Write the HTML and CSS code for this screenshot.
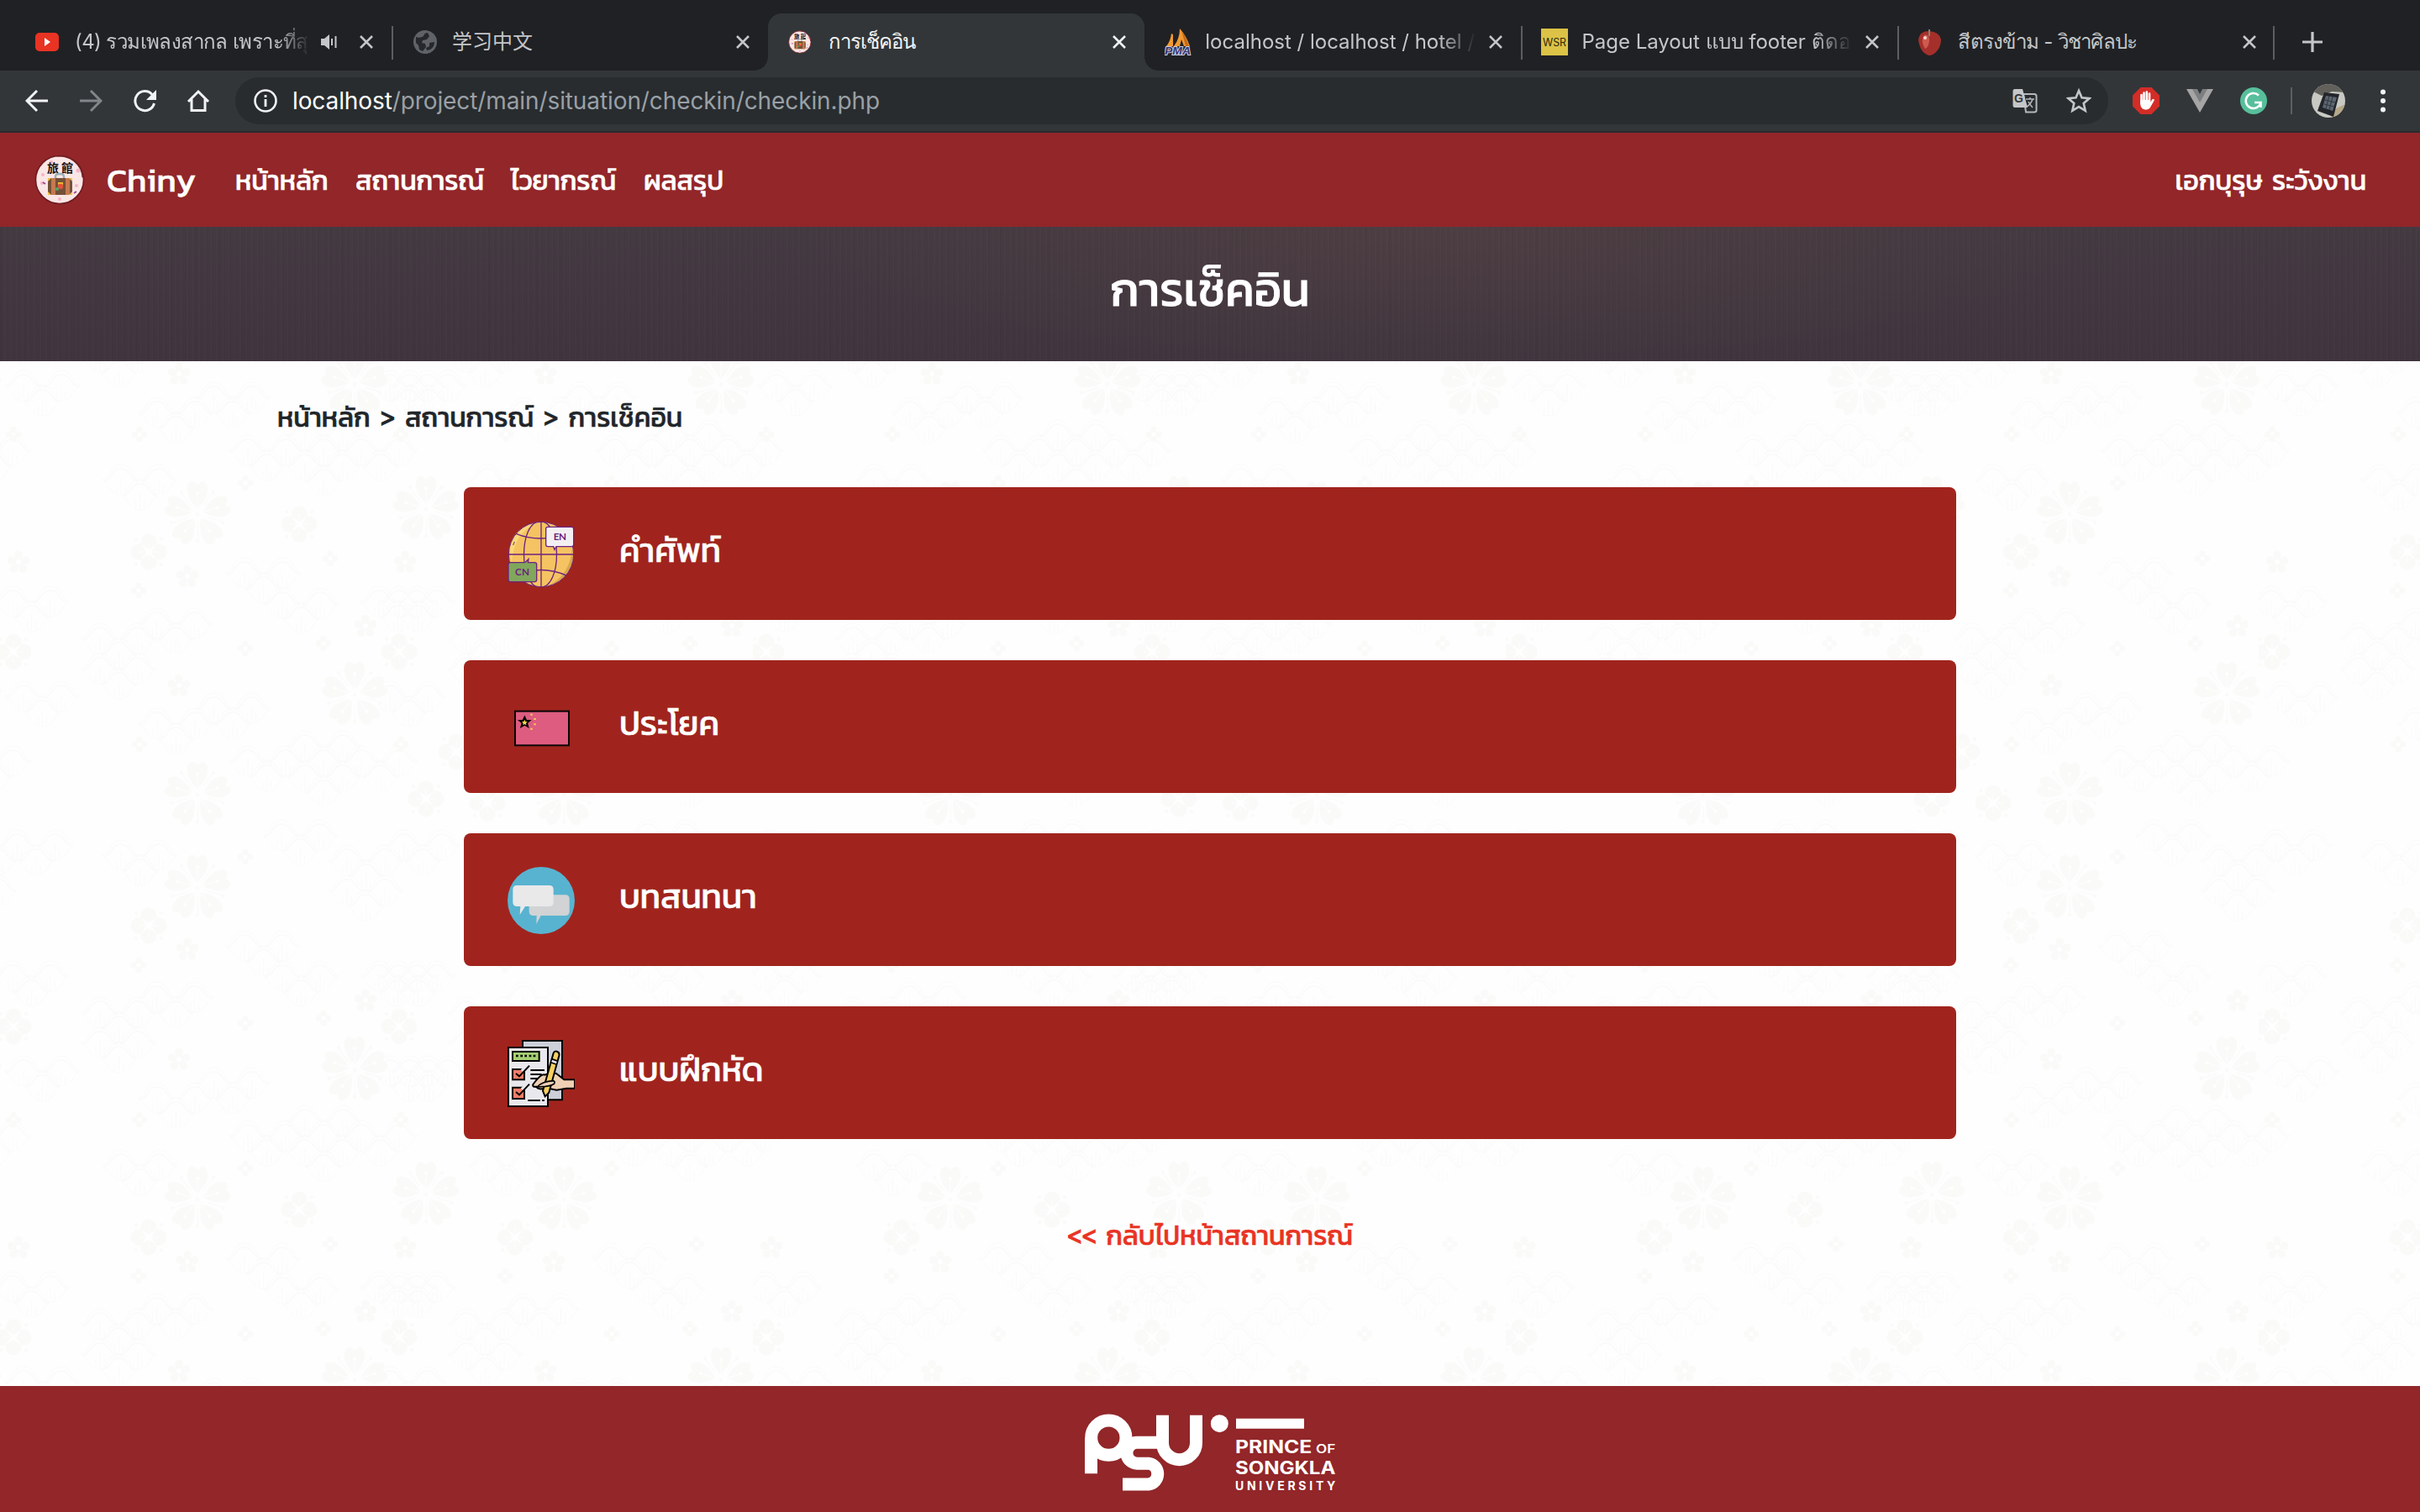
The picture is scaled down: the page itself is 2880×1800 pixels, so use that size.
FILE: index.html
```html
<!DOCTYPE html>
<html lang="th">
<head>
<meta charset="utf-8">
<title>การเช็คอิน</title>
<link rel="stylesheet" href="styles.css">
</head>
<body>
<svg class="defs" width="0" height="0" aria-hidden="true">
  <defs>
    <symbol id="close" viewBox="0 0 18 18"><path d="M2 2L16 16M16 2L2 16" fill="none" stroke="currentColor" stroke-width="2.6"/></symbol>
    <symbol id="suitcase" viewBox="0 0 60 60">
      <circle cx="30" cy="30" r="28.5" fill="#fbe6e6" stroke="#6d1a1f" stroke-width="1.6"/>
      <path d="M30 1.5A28.500 28.500 0 0 1 58.500 28L56.500 27A26 26 0 0 0 26 3Z" fill="#7a2427"/>
      <g fill="#f3b6c6"><circle cx="20" cy="9" r="2"/><circle cx="10" cy="24" r="2"/><circle cx="52" cy="19" r="2.500"/><circle cx="9" cy="34" r="2"/><circle cx="50" cy="37" r="2"/><circle cx="30" cy="53" r="2"/></g>
      <path d="M10 33l3 2M47 46l3-2" stroke="#a24a96" stroke-width="2"/>
      <g font-size="14" font-weight="700" font-family="Noto Sans CJK TC, sans-serif" fill="#171112"><text x="15" y="21" textLength="31">旅館</text></g>
      <path d="M25 29v-3q0-3 5-3t5 3v3" fill="none" stroke="#9ab0b8" stroke-width="2.500"/>
      <rect x="16" y="28" width="29" height="20" rx="2" fill="#745038"/>
      <path d="M20 28h5v20h-5zM37 28h5v20h-5z" fill="#c67a50"/>
      <path d="M16 32v-4h4zM45 32v-4h-4zM16 44v4h4zM45 44v4h-4z" fill="#f2c143"/>
      <path d="M28 33h6v5h-6z" fill="#f2b632"/><circle cx="31" cy="38" r="3.200" fill="#e0523c"/><circle cx="27" cy="41" r="2" fill="#4fae63"/>
    </symbol>
  </defs>
</svg>

<div class="window">
  <header class="chrome">
    <div class="tabs">
      <div class="tab">
        <span class="favicon"><svg viewBox="0 0 32 32"><rect x="0" y="5" width="28" height="22" rx="5" fill="#e93323"/><path d="M11 11v10l7-5z" fill="#fff"/></svg></span>
        <span class="tab-title fade"><span class="t1">(4) รวมเพลงสากล เพราะที่สุด</span></span>
        <svg class="speaker" viewBox="0 0 20 20"><path d="M0 6h4l6-5v18l-6-5H0z" fill="#c4c6c9"/><path d="M13 6v8M17.500 3v14" stroke="#c4c6c9" stroke-width="2" fill="none"/></svg>
        <svg class="close"><use href="#close"/></svg>
      </div>
      <div class="tab line">
        <span class="favicon"><svg viewBox="0 0 32 32"><circle cx="16" cy="16" r="14" fill="#5f6368"/><path d="M5 10q5 2 9-1 1-4 5-4l2 4-3 4-5 1-1 3 4 1 1 4-4 5-4-2-1-5-3-3zM21 17l6-1q0 6-5 9l-4 1-1-3 4-2z" fill="#26282b"/></svg></span>
        <span class="tab-title"><span class="t2">学习中文</span></span>
        <svg class="close"><use href="#close"/></svg>
      </div>
      <div class="tab active">
        <span class="favicon"><svg viewBox="0 0 60 60"><use href="#suitcase" width="52" height="60"/></svg></span>
        <span class="tab-title"><span class="t3">การเช็คอิน</span></span>
        <svg class="close"><use href="#close"/></svg>
      </div>
      <div class="tab">
        <span class="favicon"><svg viewBox="0 0 32 32"><path d="M2 21Q7 15 8 6l2 1v14zM11 21Q18 12 18 0q8 9 12 21l-7 0-3-8-2 8z" fill="#f29a32"/><path d="M20 2q6 9 9 19h-4z" fill="#c56a1c"/><text x="0" y="31" font-size="12" font-weight="700" font-style="italic" textLength="31" lengthAdjust="spacingAndGlyphs" font-family="Liberation Sans, sans-serif" fill="#35356f" stroke="#cdd0e4" stroke-width="1.800" paint-order="stroke">PMA</text></svg></span>
        <span class="tab-title fade"><span class="t4">localhost / localhost / hotel /</span></span>
        <svg class="close"><use href="#close"/></svg>
      </div>
      <div class="tab line">
        <span class="favicon"><svg viewBox="0 0 32 32"><path d="M0 0h32v32H0z" fill="#dcc247"/><text x="2" y="21" font-size="13" textLength="28" lengthAdjust="spacingAndGlyphs" font-family="Inter, sans-serif" fill="#2b280d">WSR</text></svg></span>
        <span class="tab-title fade"><span class="t5">Page Layout แบบ footer ติดอยู่</span></span>
        <svg class="close"><use href="#close"/></svg>
      </div>
      <div class="tab line last">
        <span class="favicon"><svg viewBox="0 0 32 32"><path d="M14 3q-12 0-13 11 2 11 7 15 4 3 6 3 4 0 8-4 6-6 6-15-2-9-14-10z" fill="#a5302b"/><path d="M8 8q5-2 6 5 0 9-5 11-6-9-1-16z" fill="#cf5a50"/><path d="M14 1v8" stroke="#8d8170" stroke-width="2"/><circle cx="9" cy="11" r="2" fill="#f2dad6"/></svg></span>
        <span class="tab-title"><span class="t6">สีตรงข้าม - วิชาศิลปะ</span></span>
        <svg class="close"><use href="#close"/></svg>
      </div>
      <svg class="plus" viewBox="0 0 24 24"><path d="M12 0v24M0 12h24" stroke="#c4c6c9" stroke-width="3.200"/></svg>
    </div>
    <div class="toolbar">
      <div class="nav-buttons">
        <svg viewBox="0 0 28 28"><path d="M27 14H3M14 2L2 14 14 26" fill="none" stroke="#f1f3f4" stroke-width="3"/></svg>
        <svg viewBox="0 0 28 28"><path d="M1 14H25M14 2L26 14 14 26" fill="none" stroke="#82868a" stroke-width="3"/></svg>
        <svg viewBox="0 0 28 28"><path d="M23 6.500A11.500 11.500 0 1 0 25.500 17" fill="none" stroke="#f1f3f4" stroke-width="3"/><path d="M28 1v12H16z" fill="#f1f3f4"/></svg>
        <svg viewBox="0 0 28 28"><path d="M2 15L14 3 26 15M6 12V25.500H22V12" fill="none" stroke="#f1f3f4" stroke-width="3"/></svg>
      </div>
      <div class="omnibox">
        <svg class="info" viewBox="0 0 28 28"><circle cx="14" cy="14" r="12.500" fill="none" stroke="#f1f3f4" stroke-width="2.600"/><path d="M14 12v9M14 7v3" stroke="#f1f3f4" stroke-width="2.800"/></svg>
        <span class="url"><b>localhost</b>/project/main/situation/checkin/checkin.php</span>
        <svg class="translate" viewBox="0 0 30 30"><path d="M13 7h13q2.500 0 2.500 2.500v17q0 2-2.500 2H16z" fill="none" stroke="#b4b7ba" stroke-width="2"/><path d="M3 1h9l6 22H3q-2.500 0-2.500-2V3Q.500 1 3 1z" fill="#c4c6c9"/><text x="2" y="17" font-size="14" font-weight="700" font-family="Liberation Sans, sans-serif" fill="#33373a">G</text><path d="M16 13h10M21 11v2M24 13q-2 6-7 9M19 16q2 4 5 7" fill="none" stroke="#b4b7ba" stroke-width="1.600"/></svg>
        <svg class="star" viewBox="0 0 30 30"><path d="M15 3l3.500 8.300 9 .8-6.800 5.900 2 8.800L15 22.100l-7.700 4.700 2-8.800L2.500 12.100l9-.8z" fill="none" stroke="#c4c6c9" stroke-width="2.600"/></svg>
      </div>
      <svg class="ext" viewBox="0 0 32 32"><path d="M9.500 0h13L32 9.500v13L22.500 32h-13L0 22.500v-13z" fill="#d32d27"/><g fill="none" stroke="#fff" stroke-width="2.600" stroke-linecap="round"><path d="M10.500 9v10M13.500 6.500V17M16.800 5.500V17M20 7.500V19M24.500 15l-3.500 6"/></g><path d="M9.200 15h12v4l1.500 1q-2 6.500-6 6.500h-2q-5.500-1-5.500-7z" fill="#fff"/></svg>
      <svg class="ext" viewBox="0 0 32 32"><path d="M0 2h8l8 14 8-14h8L16 30z" fill="#a5a5a5"/><path d="M7 2h6l3 6 3-6h6L16 18z" fill="#7d7f80"/></svg>
      <svg class="ext" viewBox="0 0 32 32"><circle cx="16" cy="16" r="16" fill="#57bf9b"/><path d="M22 9.500A9 9 0 1 0 24.500 18H17M24.500 18v6" fill="none" stroke="#fff" stroke-width="2.600"/></svg>
      <span class="separator"></span>
      <svg class="avatar" viewBox="0 0 40 40"><clipPath id="round"><circle cx="20" cy="20" r="20"/></clipPath><g clip-path="url(#round)"><path d="M0 0h40v40H0z" fill="#c9c9c4"/><path d="M0 0h40v10L24 9 12 14 0 8z" fill="#62605a"/><path d="M27 30l13-6v16H22z" fill="#b5a888"/><path d="M15 10l18 2-7 27-19-7z" fill="#23252b"/><path d="M17 14l13 2-5 16-12-4z" fill="#5c6670"/><path d="M16 19l12 3M15 24l12 3M21 14l-4 15M25 15l-4 16" stroke="#30363e"/></g></svg>
      <svg class="dots" viewBox="0 0 6 28"><circle cx="3" cy="3.500" r="3"/><circle cx="3" cy="14" r="3"/><circle cx="3" cy="24.500" r="3"/></svg>
    </div>
  </header>

  <nav class="navbar">
    <svg class="brand-logo"><use href="#suitcase"/></svg>
    <a class="brand">Chiny</a>
    <a class="link n1">หน้าหลัก</a>
    <a class="link n2">สถานการณ์</a>
    <a class="link n3">ไวยากรณ์</a>
    <a class="link n4">ผลสรุป</a>
    <a class="link user">เอกบุรุษ ระวังงาน</a>
  </nav>

  <section class="hero"><h1>การเช็คอิน</h1></section>

  <main class="page">
    <svg class="backdrop" width="2880" height="1220" aria-hidden="true">
      <defs>
        <g id="hump" fill="none" stroke="#fafafa"><path d="M-23 18C-12 18-15 0 0 0S12 18 23 18" stroke-width="1"/><path d="M-21 20C-10 18-12 5 0 5S10 18 21 20" stroke-width="1.500"/><path d="M-21 19C-13 24-13 36 0 36S13 24 21 19" stroke-width=".8"/><path d="M0 16v18M-5 24v10M5 24v10" stroke-width="1.100"/></g>
        <g id="v"><use href="#hump"/><use href="#hump" x="45"/><use href="#hump" x="22.500" y="18"/></g>
        <g id="chain"><use href="#v"/><use href="#v" x="45" y="36"/></g>
        <g id="c"><use href="#v"/><use href="#v" x="67.500" y="-18"/></g>
        <g id="b"><use href="#c"/><use href="#v" y="36"/></g>
        <g id="d"><use href="#v"/><use href="#hump" x="68" y="-18"/><use href="#hump" x="113" y="-18"/><use href="#hump" x="90"/><use href="#hump" x="135"/><use href="#hump" x="180"/><use href="#hump" x="68" y="18"/><use href="#hump" x="113" y="18"/><use href="#hump" x="158" y="18"/><use href="#hump" x="90" y="36"/></g>
        <g id="petal"><path d="M0-7C-14-20-15-34-8-39Q-4-40 0-35 4-40 8-39C15-34 14-20 0-7z" fill="#fafaf8"/><path d="M0-8v-17" stroke="#fff"/><circle cy="-25" r="2" fill="#fff"/><path d="M7-10L18-26" stroke="#fafaf8"/><circle cx="19" cy="-26" r="2" fill="#fafaf8"/></g>
        <g id="big"><use href="#petal"/><use href="#petal" transform="rotate(72)"/><use href="#petal" transform="rotate(144)"/><use href="#petal" transform="rotate(216)"/><use href="#petal" transform="rotate(288)"/><circle r="2.200" fill="#fafaf8"/></g>
        <g id="quad"><g fill="#fafaf8"><circle cy="-12" r="9.500"/><circle cy="12" r="9.500"/><circle cx="-12" r="9.500"/><circle cx="12" r="9.500"/><circle cx="15" cy="-15" r="2"/><circle cx="-15" cy="-15" r="2"/><circle cx="15" cy="15" r="2"/><circle cx="-15" cy="15" r="2"/></g><path d="M-8-8Q0-4 8 8Q0 4-8-8M8-8Q4 0-8 8Q-4 0 8-8" fill="#fff" stroke="#fff"/><path d="M-12 0h24M0-12v24" stroke="#fff"/></g>
        <g id="five"><g fill="#fafaf8"><circle cy="-8.500" r="4.800"/><circle cx="8.500" cy="-2" r="4.800"/><circle cx="5.500" cy="8" r="4.800"/><circle cx="-5.500" cy="8" r="4.800"/><circle cx="-8.500" cy="-2" r="4.800"/><circle r="6"/></g><circle r="3" fill="#fff"/></g>
        <g id="four"><g fill="#fafaf8"><circle cy="-5.500" r="3.800"/><circle cy="5.500" r="3.800"/><circle cx="5.500" r="3.800"/><circle cx="-5.500" r="3.800"/></g><circle r="2.500" fill="#fff"/></g>
        <g id="half">
          <use href="#v" x="28" y="11"/><use href="#v" x="28" y="381"/><use href="#v" x="144" y="123"/><use href="#v" x="144" y="570"/><use href="#v" x="15" y="714"/><use href="#v" x="15" y="268"/><use href="#v" x="335" y="546"/>
          <use href="#chain" x="291" y="234"/><use href="#chain" x="291" y="678"/>
          <use href="#b" x="119" y="757"/><use href="#b" x="119" y="312"/><use href="#b" x="413" y="576"/>
          <use href="#c" x="187" y="43"/><use href="#c" x="187" y="413"/>
          <use href="#d" x="295" y="88"/><use href="#d" x="295" y="458"/>
          <use href="#big" x="422" y="28"/><use href="#big" x="422" y="397"/><use href="#big" x="422" y="843"/><use href="#big" x="235" y="182"/><use href="#big" x="235" y="516"/><use href="#big" x="235" y="627"/>
          <use href="#quad" x="177" y="227"/><use href="#quad" x="177" y="672"/>
          <use href="#five" x="213" y="15"/><use href="#five" x="213" y="386"/><use href="#five" x="435" y="761"/><use href="#five" x="435" y="315"/><use href="#five" x="223" y="256"/><use href="#five" x="223" y="700"/>
          <use href="#four" x="165" y="719"/><use href="#four" x="292" y="788"/><use href="#four" x="385" y="782"/><use href="#four" x="166" y="87"/><use href="#four" x="292" y="145"/><use href="#four" x="393" y="235"/><use href="#four" x="165" y="273"/><use href="#four" x="292" y="342"/><use href="#four" x="385" y="336"/><use href="#four" x="166" y="456"/><use href="#four" x="292" y="590"/>
        </g>
        <g id="tile">
          <use href="#half"/><use href="#half" x="436"/>
          <use href="#v" x="475" y="268"/><use href="#v" x="488" y="11"/><use href="#v" x="475" y="714"/>
          <use href="#big" x="507" y="176"/>
          <use href="#quad" x="16" y="792"/><use href="#quad" x="475" y="792"/><use href="#quad" x="16" y="346"/><use href="#quad" x="475" y="346"/><use href="#quad" x="356" y="194"/><use href="#quad" x="543" y="465"/><use href="#quad" x="507" y="521"/><use href="#quad" x="580" y="526"/>
          <use href="#five" x="22" y="239"/><use href="#five" x="482" y="239"/><use href="#four" x="477" y="87"/><use href="#four" x="16" y="87"/><use href="#four" x="477" y="456"/>
        </g>
        <pattern id="sakura" width="896" height="816" patternUnits="userSpaceOnUse"><use href="#tile"/><use href="#tile" x="-896"/><use href="#tile" y="-816"/></pattern>
      </defs>
      <rect width="2880" height="1220" fill="url(#sakura)"/>
    </svg>

    <div class="content">
      <p class="crumbs">หน้าหลัก &gt; สถานการณ์ &gt; การเช็คอิน</p>
      <div class="menu">
        <a class="card">
          <svg viewBox="0 0 240 240">
            <clipPath id="ball"><circle cx="120" cy="120" r="116"/></clipPath>
            <circle cx="120" cy="120" r="116" fill="#f5c362"/>
            <path d="M8 92Q20 30 90 8L100 12Q25 40 14 150z" fill="#fbdc80" opacity=".8"/>
            <path d="M230 100Q225 190 150 230 215 210 234 140z" fill="#d9a64a"/>
            <g clip-path="url(#ball)" fill="none" stroke="#6d2280" stroke-width="4"><path d="M120 0v240M0 120h240"/><path d="M120 2C42 2 42 238 120 238M120 2C198 2 198 238 120 238" transform="translate(-3)"/><path d="M30 46Q115 80 212 46M30 196Q120 155 212 196"/></g>
            <circle cx="120" cy="120" r="116" fill="none" stroke="#6d2280" stroke-width="3"/>
            <path d="M20 87l5-12" stroke="#6d2280" stroke-width="3"/>
            <path d="M143 22h86q7 0 7 7v56q0 7-7 7h-55l-6 11-4-11h-21q-6 0-6-7V29q0-7 6-7z" fill="#f3f0f2" stroke="#6d2280" stroke-width="4"/>
            <path d="M10 149h52l13-12-2 12h24q7 0 7 7v55q0 7-7 7H10q-7 0-7-7v-55q0-7 7-7z" fill="#80a75c" stroke="#6d2280" stroke-width="4"/>
            <text x="164" y="70" font-size="35" font-weight="700" textLength="46" font-family="Lato, sans-serif" fill="#6d2280">EN</text>
            <text x="27" y="195" font-size="35" font-weight="700" textLength="51" font-family="Lato, sans-serif" fill="#6d2280">CN</text>
          </svg>
          <span class="c1">คำศัพท์</span>
        </a>
        <a class="card">
          <svg viewBox="0 0 240 240"><rect x="27" y="62" width="192" height="122" fill="#de5c80" stroke="#0b0506" stroke-width="6"/><path d="M61 81l6 13 14 1-11 9 4 15-13-8-13 8 4-15-11-9 14-1z" stroke="#000" stroke-width="4"/><path d="M61 92l3 7 7 1-5 5 1 7-6-4-6 4 1-7-5-5 7-1z" fill="#f6d650"/><path d="M82 71h7v6h-7zM94 87h7v6h-7zM94 106h7v6h-7zM82 122h7v6h-7z" fill="#f6d650"/></svg>
          <span class="c2">ประโยค</span>
        </a>
        <a class="card">
          <svg viewBox="0 0 240 240"><circle cx="120" cy="120" r="120" fill="#58b3d0"/><path d="M92 100h114q15 0 15 15v44q0 15-15 15h-87l-16 30 1-30H92q-15 0-15-15v-44q0-15 15-15z" fill="#d1d3d5"/><path d="M34 66h115q15 0 15 15v45q0 15-15 15H63l-19 30 2-30H34q-15 0-15-15V81q0-15 15-15z" fill="#e9e9ea"/></svg>
          <span class="c3">บทสนทนา</span>
        </a>
        <a class="card">
          <svg viewBox="0 0 240 240">
            <g stroke="#000" stroke-width="6"><path d="M54 3h141v211h-60V28H54z" fill="#cdd0d9"/><path d="M3 27h141v210H3z" fill="#e8e8ed"/><path d="M18 42h95v33H18z" fill="#a5cf72"/>
            <path d="M18 105h42v37H18zM18 170h42v40H18z" fill="#ef7d68"/></g>
            <path d="M30 57h8M46 57h8M61 57h8M77 57h8M92 57h8" stroke="#000" stroke-width="8"/>
            <path d="M52 112l26-24M52 178l26-24" fill="none" stroke="#e8e8ed" stroke-width="14"/>
            <path d="M30 120l12 10 36-38M30 186l12 10 36-38M82 108h50M82 123h40M82 138h28M73 216h44M123 216h9" fill="none" stroke="#000" stroke-width="6"/>
            <path d="M240 142h-38l-28-22-23-2-18 7q-12-7-42 34-3 10 12 8 5 10 20 8l28-1 24 5 35-6h30z" fill="#efd0b4" stroke="#000" stroke-width="6"/>
            <path d="M164 47q4-9 14-5 8 3 6 14l-36 132-14 14-8-20z" fill="#f5cf60" stroke="#000" stroke-width="6"/>
            <path d="M156 74l20 7" stroke="#000" stroke-width="18"/><path d="M158 75l17 6" stroke="#e4e4e8" stroke-width="8"/>
            <path d="M105 168q20-20 58-22 8 2 4 10-10 8-32 10z" fill="#efd0b4" stroke="#000" stroke-width="5"/>
          </svg>
          <span class="c4">แบบฝึกหัด</span>
        </a>
      </div>
      <a class="back">&lt;&lt; กลับไปหน้าสถานการณ์</a>
    </div>
  </main>

  <footer class="footer">
    <svg viewBox="150 790 900 276" width="300" height="92">
      <g fill="none" stroke="#fff" stroke-width="45"><circle cx="238" cy="876" r="62"/><path d="M175.500 876V1004M411 893H340a37 37 0 0 0 0 74.500H380a37.500 37.500 0 0 1 0 74.500H288M430.500 795V894a60 60 0 0 0 120 0V795"/></g>
      <circle cx="634" cy="825" r="31.500" fill="#fff"/><path d="M693 807h243v36H693z" fill="#fff"/>
      <g fill="#fff" font-family="Inter, sans-serif" font-weight="700"><text x="690" y="931" font-size="63" textLength="274" lengthAdjust="spacingAndGlyphs">PRINCE</text><text x="978" y="931" font-size="43" font-weight="600" textLength="70" lengthAdjust="spacingAndGlyphs">OF</text><text x="690" y="1005" font-size="63" textLength="358" lengthAdjust="spacingAndGlyphs">SONGKLA</text><text x="690" y="1064" font-size="42" textLength="358">UNIVERSITY</text></g>
    </svg>
  </footer>
</div>
</body>
</html>
```
FILE: styles.css
```css
* { box-sizing: border-box; }
body { margin: 0; background: #fff; }
.defs { display: block; }
.window {
  display: flex;
  flex-direction: column;
  width: 2880px;
  height: 1800px;
  overflow: hidden;
  font-family: "Kanit", "Noto Sans Thai", "Noto Sans", sans-serif;
}
svg { flex: none; }

/* browser chrome */
.chrome { flex: none; height: 158px; background: #323639; border-bottom: 2px solid #272b2e; font-family: Inter, "Noto Sans CJK SC", sans-serif; }
.tabs { display: flex; height: 84px; padding: 16px 0 0 18px; background: #202124; }
.tab { flex: none; display: flex; align-items: center; width: 448.100px; height: 68px; padding: 0 21px 0 24px; color: #c4c6c9; }
.tab.line { background: linear-gradient(#5b5e62, #5b5e62) 0 15px / 2px 40px no-repeat; }
.tab.last { background: linear-gradient(#5b5e62, #5b5e62) 0 15px / 2px 40px no-repeat, linear-gradient(#5b5e62, #5b5e62) 100% 15px / 2px 40px no-repeat; }
.tab.active { position: relative; background: #323639; border-radius: 16px 16px 0 0; color: #f1f3f4; }
.tab.active::before, .tab.active::after { content: ""; position: absolute; bottom: 0; width: 16px; height: 16px; }
.tab.active::before { left: -16px; background: radial-gradient(circle at 0 0, transparent 15.5px, #323639 16px); }
.tab.active::after { right: -16px; background: radial-gradient(circle at 100% 0, transparent 15.5px, #323639 16px); }
.favicon { flex: none; width: 32px; height: 32px; margin-right: 16px; }
.favicon svg { display: block; width: 32px; height: 32px; }
.tab-title { flex: 1; min-width: 0; overflow: hidden; white-space: nowrap; font-size: 24px; line-height: 44px; margin-right: 14px; }
.fade { -webkit-mask-image: linear-gradient(90deg, #000 86%, transparent 100%); mask-image: linear-gradient(90deg, #000 86%, transparent 100%); }
.t1 { letter-spacing: -.6px; margin-left: -1px; }
.t3 { letter-spacing: -1px; }
.t6 { letter-spacing: -.75px; }
.speaker { width: 20px; height: 20px; margin-right: 25px; }
.tab:first-child .tab-title { margin-right: 13px; }
.close { width: 18px; height: 18px; }
.plus { width: 24px; height: 24px; margin: 22px 0 0 33px; }
.toolbar { display: flex; align-items: center; height: 72px; }
.nav-buttons { display: flex; gap: 36px; padding-left: 30px; width: 280px; }
.nav-buttons svg { width: 28px; height: 28px; }
.omnibox { display: flex; align-items: center; width: 2229px; height: 56px; margin-right: 29px; padding: 0 20px 0 22px; border-radius: 28px; background: #282c2f; }
.info { width: 28px; height: 28px; margin-right: 18px; }
.url { flex: 1; color: #9aa0a6; font-size: 28px; letter-spacing: -.1px; white-space: nowrap; }
.url b { color: #fff; font-weight: 400; }
.translate { width: 30px; height: 30px; margin-right: 34px; }
.star { width: 30px; height: 30px; }
.ext { width: 32px; height: 32px; margin-right: 32px; }
.separator { width: 2px; height: 32px; margin: 0 23px 0 -4px; background: #5b5e62; }
.avatar { width: 40px; height: 40px; margin-right: 42px; }
.dots { width: 6px; height: 28px; fill: #f1f3f4; }

/* site navigation */
.navbar { flex: none; display: flex; align-items: center; height: 112px; padding: 0 64px 0 41px; background: #922629; color: #fff; white-space: nowrap; }
.brand-logo { width: 60px; height: 60px; }
.brand { width: 153px; margin-left: 26px; font-size: 40px; letter-spacing: .4px; }
.link { padding-top: 2px; font-size: 32px; }
.brand, .link, .crumbs, .back, .card span { font-weight: 400; -webkit-text-stroke: .7px currentColor; }
.n1 { width: 143px; }
.n2 { width: 185px; }
.n3 { width: 158px; }
.user { margin-left: auto; word-spacing: 4px; }

.hero {
  flex: none;
  display: flex;
  align-items: center;
  justify-content: center;
  height: 160px;
  padding-bottom: 13px;
  background:
    repeating-linear-gradient(90deg, rgba(0,0,0,.015) 0 2px, transparent 2px 5px, rgba(255,255,255,.01) 5px 7px),
    repeating-linear-gradient(90deg, rgba(0,0,0,.015) 0 3px, transparent 3px 17px, rgba(0,0,0,.02) 17px 18px, transparent 18px 29px),
    radial-gradient(ellipse 760px 170px at 1720px 0, rgba(86,66,66,.5), transparent),
    linear-gradient(180deg, #443a42, #40353e);
}
h1 { margin: 0; color: #fff; font-size: 56px; font-weight: 400; line-height: 1; -webkit-text-stroke: 1px #fff; }

/* page body */
.page { flex: none; display: grid; height: 1220px; overflow: hidden; background: #fefefe; }
.backdrop, .content { grid-area: 1 / 1; }
.content { display: flex; flex-direction: column; align-items: center; }
.crumbs { align-self: flex-start; height: 60px; margin: 37px 0 53px 330px; color: #212529; font-size: 32px; line-height: 60px; word-spacing: 4.600px; }
.menu { display: flex; flex-direction: column; gap: 48px; width: 1776px; }
.card { display: flex; align-items: center; gap: 53px; height: 158px; padding-left: 52px; border-radius: 8px; background: #a0241d; color: #fff; font-size: 40px; }
.card svg { width: 80px; height: 80px; margin-top: 2px; }
.card span { line-height: 60px; padding-bottom: 8px; }
.back { margin-top: 85px; color: #e93323; font-size: 32px; line-height: 60px; word-spacing: 4px; }

.footer { flex: none; height: 150px; padding: 33px 0 0 1290px; background: #922629; }
.footer svg { display: block; }
```
